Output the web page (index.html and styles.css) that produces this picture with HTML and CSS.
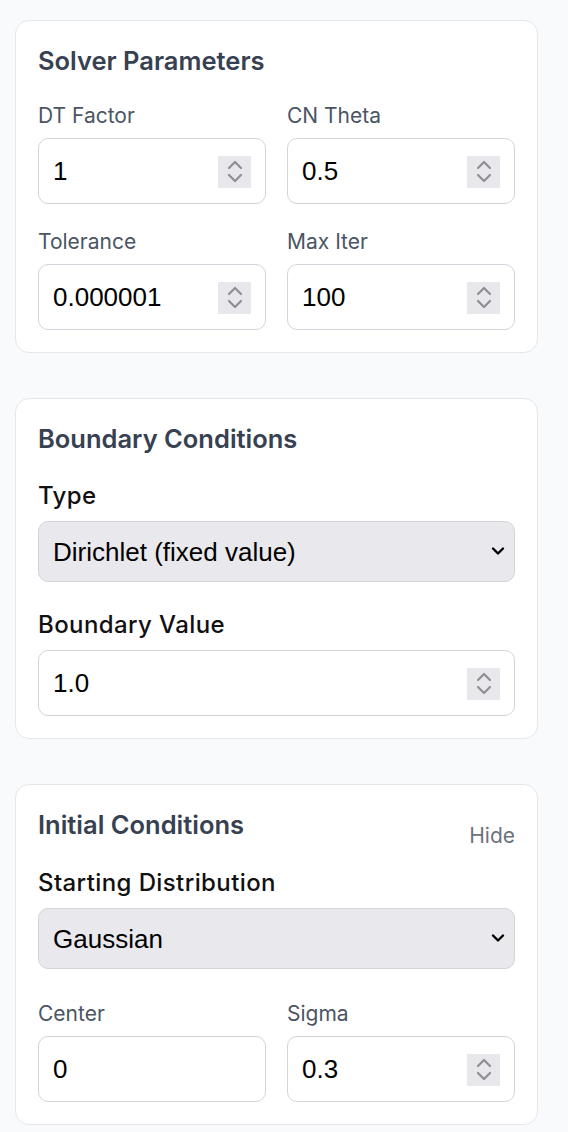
FILE: index.html
```html
<!DOCTYPE html>
<html lang="en">
<head>
<meta charset="utf-8">
<title>Solver Settings</title>
<link rel="stylesheet" href="styles.css">
</head>
<body>
<div class="page">
  <section class="card">
    <h2 class="card-title">Solver Parameters</h2>
    <div class="grid">
      <div class="field">
        <label class="label">DT Factor</label>
        <div class="num">
          <input class="input" type="text" value="1">
          <span class="spin"><svg width="33" height="32" viewBox="0 0 33 32"><path d="M11 12 L17 6 L23 12 M11 19 L17 25 L23 19"/></svg></span>
        </div>
      </div>
      <div class="field">
        <label class="label">CN Theta</label>
        <div class="num">
          <input class="input" type="text" value="0.5">
          <span class="spin"><svg width="33" height="32" viewBox="0 0 33 32"><path d="M11 12 L17 6 L23 12 M11 19 L17 25 L23 19"/></svg></span>
        </div>
      </div>
      <div class="field">
        <label class="label">Tolerance</label>
        <div class="num">
          <input class="input" type="text" value="0.000001">
          <span class="spin"><svg width="33" height="32" viewBox="0 0 33 32"><path d="M11 12 L17 6 L23 12 M11 19 L17 25 L23 19"/></svg></span>
        </div>
      </div>
      <div class="field">
        <label class="label">Max Iter</label>
        <div class="num">
          <input class="input" type="text" value="100">
          <span class="spin"><svg width="33" height="32" viewBox="0 0 33 32"><path d="M11 12 L17 6 L23 12 M11 19 L17 25 L23 19"/></svg></span>
        </div>
      </div>
    </div>
  </section>

  <section class="card">
    <h2 class="card-title">Boundary Conditions</h2>
    <div class="field">
      <label class="label-strong">Type</label>
      <div class="sel">
        <select class="select">
          <option>Dirichlet (fixed value)</option>
          <option>Neumann (fixed flux)</option>
          <option>Periodic</option>
        </select>
        <span class="caret"><svg width="14" height="10" viewBox="0 0 14 10"><path d="M2 2.5 L7 7.5 L12 2.5"/></svg></span>
      </div>
    </div>
    <div class="field field-gap">
      <label class="label-strong">Boundary Value</label>
      <div class="num">
        <input class="input" type="text" value="1.0">
        <span class="spin"><svg width="33" height="32" viewBox="0 0 33 32"><path d="M11 12 L17 6 L23 12 M11 19 L17 25 L23 19"/></svg></span>
      </div>
    </div>
  </section>

  <section class="card">
    <div class="card-head">
      <h2 class="card-title">Initial Conditions</h2>
      <button class="hide-btn" type="button">Hide</button>
    </div>
    <div class="field">
      <label class="label-strong">Starting Distribution</label>
      <div class="sel">
        <select class="select">
          <option>Gaussian</option>
          <option>Uniform</option>
          <option>Step</option>
        </select>
        <span class="caret"><svg width="14" height="10" viewBox="0 0 14 10"><path d="M2 2.5 L7 7.5 L12 2.5"/></svg></span>
      </div>
    </div>
    <div class="grid grid-gap">
      <div class="field">
        <label class="label">Center</label>
        <div class="num">
          <input class="input" type="text" value="0">
        </div>
      </div>
      <div class="field">
        <label class="label">Sigma</label>
        <div class="num">
          <input class="input" type="text" value="0.3">
          <span class="spin"><svg width="33" height="32" viewBox="0 0 33 32"><path d="M11 12 L17 6 L23 12 M11 19 L17 25 L23 19"/></svg></span>
        </div>
      </div>
    </div>
  </section>
</div>
</body>
</html>
```

FILE: styles.css
```css
* { box-sizing: border-box; }

html, body {
  margin: 0;
  padding: 0;
  background: #f9fafb;
}

body {
  font-family: Inter, "Noto Sans", sans-serif;
  color: #111827;
}

.page {
  padding: 20px 30px 0 15px;
  display: flex;
  flex-direction: column;
  gap: 45px;
}

.card {
  background: #ffffff;
  border: 1px solid #e5e7eb;
  border-radius: 14px;
  padding: 22px;
}

.card-title {
  margin: 0 0 23px 0;
  font-size: 25.5px;
  line-height: 36px;
  font-weight: 600;
  color: #374151;
}

.card-head {
  display: flex;
  justify-content: space-between;
  align-items: flex-start;
  margin-bottom: 17px;
}

.card-head .card-title {
  margin-bottom: 0;
}

.hide-btn {
  margin-top: 15px;
  padding: 0;
  border: 0;
  background: none;
  font-family: Inter, "Noto Sans", sans-serif;
  font-size: 21px;
  line-height: 28px;
  color: #6b7280;
  cursor: pointer;
}

.grid {
  display: grid;
  grid-template-columns: 1fr 1fr;
  column-gap: 21px;
  row-gap: 24px;
}

.grid-gap {
  margin-top: 31px;
}

.field {
  display: flex;
  flex-direction: column;
}

.field-gap {
  margin-top: 27px;
}

.label {
  font-size: 21px;
  line-height: 28px;
  color: #4b5563;
  margin-bottom: 8px;
}

.label-strong {
  font-size: 24px;
  line-height: 32px;
  font-weight: 500;
  letter-spacing: 0.4px;
  color: #111111;
  margin-bottom: 9px;
}

.num, .sel {
  position: relative;
}

.input {
  width: 100%;
  height: 66px;
  border: 1px solid #d1d5db;
  border-radius: 10px;
  background: #ffffff;
  padding: 0 50px 0 14px;
  font-family: "Liberation Sans", Arial, sans-serif;
  font-size: 26px;
  color: #000000;
  outline: none;
}

.spin {
  position: absolute;
  right: 15px;
  top: 18px;
  width: 33px;
  height: 32px;
  background: #e8e8ec;
  pointer-events: none;
}

.spin svg {
  display: block;
}

.spin path {
  fill: none;
  stroke: #8e8e93;
  stroke-width: 2.2;
  stroke-linecap: round;
  stroke-linejoin: round;
}

.select {
  width: 100%;
  height: 61px;
  -webkit-appearance: none;
  appearance: none;
  border: 1px solid #d4d4d8;
  border-radius: 10px;
  background: #e9e9ed;
  padding: 0 40px 0 14px;
  font-family: "Liberation Sans", Arial, sans-serif;
  font-size: 26px;
  color: #000000;
  outline: none;
}

.caret {
  position: absolute;
  right: 10px;
  top: 25px;
  width: 14px;
  height: 10px;
  pointer-events: none;
}

.caret svg {
  display: block;
}

.caret path {
  fill: none;
  stroke: #000000;
  stroke-width: 2.4;
  stroke-linecap: round;
  stroke-linejoin: round;
}
```
